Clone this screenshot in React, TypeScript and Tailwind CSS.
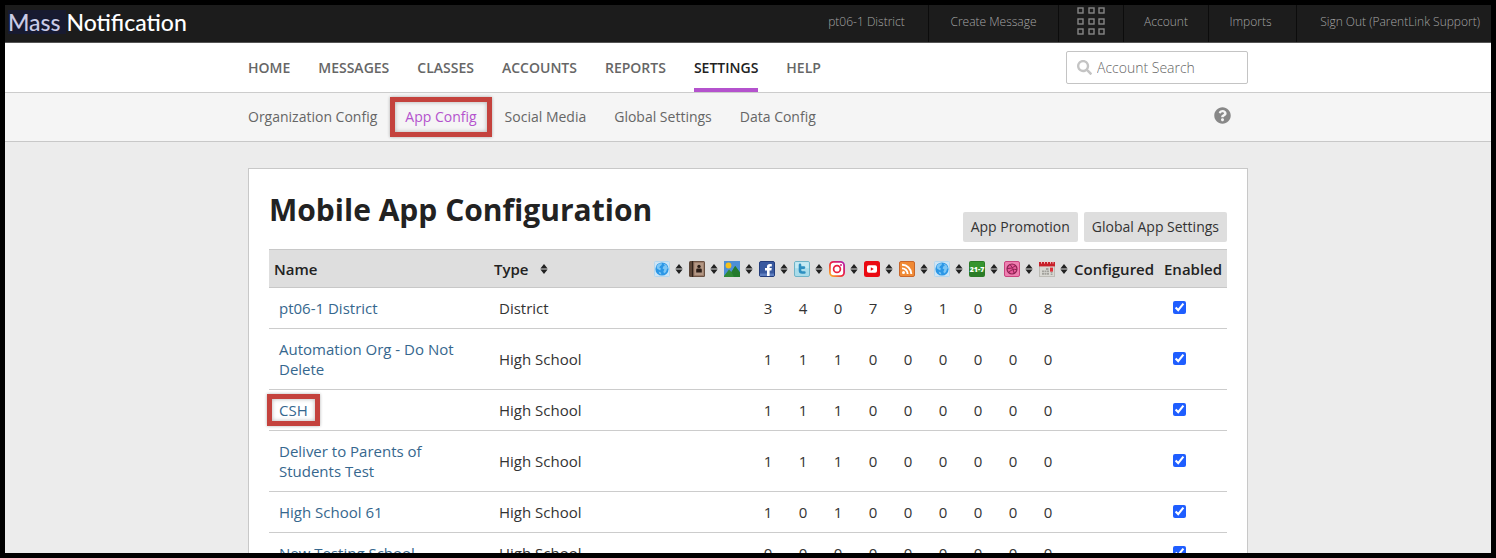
import { ReactNode, useState } from "react";
import { FaQuestionCircle, FaSearch } from "react-icons/fa";

interface Organization {
  name: string;
  type: string;
  counts: number[];
  marked?: boolean;
}

const navItems = ["Home", "Messages", "Classes", "Accounts", "Reports", "Settings", "Help"];

const subNavItems = ["Organization Config", "App Config", "Social Media", "Global Settings", "Data Config"];

const organizations: Organization[] = [
  { name: "pt06-1 District", type: "District", counts: [3, 4, 0, 7, 9, 1, 0, 0, 8] },
  { name: "Automation Org - Do Not Delete", type: "High School", counts: [1, 1, 1, 0, 0, 0, 0, 0, 0] },
  { name: "CSH", type: "High School", counts: [1, 1, 1, 0, 0, 0, 0, 0, 0], marked: true },
  { name: "Deliver to Parents of Students Test", type: "High School", counts: [1, 1, 1, 0, 0, 0, 0, 0, 0] },
  { name: "High School 61", type: "High School", counts: [1, 0, 1, 0, 0, 0, 0, 0, 0] },
  { name: "New Testing School", type: "High School", counts: [0, 0, 0, 0, 0, 0, 0, 0, 0] },
];

function Icon({ children }: { children: ReactNode }) {
  return (
    <svg width="16" height="16" viewBox="0 0 16 16" className="shrink-0" aria-hidden="true">
      {children}
    </svg>
  );
}

function GlobeIcon() {
  return (
    <Icon>
      <rect x="0.5" y="0.5" width="15" height="15" rx="1" fill="#cfe5f5" stroke="#b4d7ee" />
      <circle cx="8" cy="8" r="6.6" fill="#2b97e6" />
      <path d="M2.6 5 5 2.6 8 2.2 7.6 4 6 5.2 5.4 6.8 7 7.6 6.2 9.4 4.6 8.6 3 7.6Z" fill="#7cc6f5" />
      <path d="M9.4 2.6 12.4 4 14 7 12.8 8.4 12 11 10 12.6 9.4 10.4 10.4 8.6 8.6 7.4 9.2 5.6 10.8 4.8Z" fill="#7cc6f5" />
      <path d="M4.6 10.4 6.8 11.4 7.4 13.6 5.6 13Z" fill="#7cc6f5" />
    </Icon>
  );
}

function DirectoryIcon() {
  return (
    <Icon>
      <rect x="0" y="0" width="16" height="16" rx="1.5" fill="#5b4537" />
      <rect x="4.5" y="0.8" width="10.7" height="14.4" rx="0.8" fill="#9a7b68" />
      <rect x="5.5" y="2" width="8.8" height="12" fill="#b39784" />
      <rect x="3" y="0" width="1" height="16" fill="#2f221a" />
      <circle cx="10" cy="5.4" r="1.7" fill="#2a1d17" />
      <path d="M7.2 11.5V8.8Q7.2 7.6 8.6 7.6H11.4Q12.8 7.6 12.8 8.8V11.5Z" fill="#2a1d17" />
    </Icon>
  );
}

function PictureIcon() {
  return (
    <Icon>
      <rect width="16" height="16" fill="#4d8fd6" />
      <circle cx="4.5" cy="4.5" r="2.9" fill="#f5c11d" />
      <path d="M0 15 5 8.5 7.5 11 11.2 5 16 11.5V16H0Z" fill="#2f8a35" />
      <path d="M7.5 11 11.2 5 16 11.5V16H10Z" fill="#237a2c" />
    </Icon>
  );
}

function FacebookIcon() {
  return (
    <Icon>
      <rect x="0.5" y="0.5" width="15" height="15" rx="1.5" fill="#39599f" stroke="#243d7c" />
      <rect x="1" y="12.5" width="14" height="2.5" fill="#5f7fc0" />
      <path d="M8 15V9.5H6V7H8V5.6Q8 3 10.8 3H12.8V5.4H11.4Q10.6 5.4 10.6 6.2V7H12.8L12.4 9.5H10.6V15Z" fill="#fff" />
    </Icon>
  );
}

function TwitterIcon() {
  return (
    <Icon>
      <rect x="0.5" y="0.5" width="15" height="15" rx="1.5" fill="#a9dcea" stroke="#6fb4c8" />
      <rect x="1.2" y="1.2" width="13.6" height="6" fill="#c6eaf3" />
      <path d="M6 3.9V9.6Q6 11.5 8.2 11.5H10.4M6 6.6H10" fill="none" stroke="#2d8fc0" strokeWidth="2.6" strokeLinecap="round" />
    </Icon>
  );
}

function InstagramIcon() {
  return (
    <Icon>
      <defs>
        <linearGradient id="insta" x1="0" y1="1" x2="1" y2="0">
          <stop offset="0" stopColor="#fdb52b" />
          <stop offset="0.5" stopColor="#ee1f3c" />
          <stop offset="1" stopColor="#b222b0" />
        </linearGradient>
      </defs>
      <rect x="0.9" y="0.9" width="14.2" height="14.2" rx="3.6" fill="#fff" stroke="url(#insta)" strokeWidth="1.8" />
      <circle cx="8" cy="8" r="3.4" fill="none" stroke="#e8203f" strokeWidth="1.7" />
      <circle cx="12" cy="4" r="1" fill="#cf1f7c" />
    </Icon>
  );
}

function YoutubeIcon() {
  return (
    <Icon>
      <rect width="16" height="16" rx="2.5" fill="#ea0a12" />
      <rect x="3" y="4.2" width="10" height="7.6" rx="1.8" fill="#fff" />
      <path d="M6.8 6.2V9.8L9.8 8Z" fill="#ea0a12" />
    </Icon>
  );
}

function RssIcon() {
  return (
    <Icon>
      <rect x="0.5" y="0.5" width="15" height="15" rx="1.5" fill="#f08a35" stroke="#c9662a" />
      <circle cx="4.5" cy="11.6" r="1.5" fill="#fff" />
      <path d="M3 7.4A5.7 5.7 0 0 1 8.7 13M3 3.8A9.3 9.3 0 0 1 12.3 13" fill="none" stroke="#fff" strokeWidth="1.9" />
    </Icon>
  );
}

function ScoreIcon() {
  return (
    <Icon>
      <rect x="0.5" y="0.5" width="15" height="15" rx="1" fill="#36952f" stroke="#2b7a27" />
      <rect x="1" y="11" width="14" height="4" fill="#2a7c26" />
      <text x="8" y="11" textAnchor="middle" fontSize="7" fontWeight="800" fill="#fff" fontFamily="Open Sans, sans-serif">
        21-7
      </text>
    </Icon>
  );
}

function DribbbleIcon() {
  return (
    <Icon>
      <rect x="0.5" y="0.5" width="15" height="15" rx="1.5" fill="#ee7fb0" stroke="#c9447f" />
      <circle cx="8" cy="8" r="5" fill="#e8589a" stroke="#8d2352" strokeWidth="1.2" />
      <path d="M6 3.4Q9.4 7 10.2 12.4M3 7.6Q8.4 8 11.6 4.6M4.6 11.6Q7.6 7.6 13 8.6" fill="none" stroke="#8d2352" strokeWidth="1" />
    </Icon>
  );
}

function CalendarIcon() {
  return (
    <Icon>
      <rect x="0.5" y="2" width="15" height="13.5" fill="#d9d8d3" stroke="#bdbcb6" />
      <rect x="0" y="1" width="16" height="4.4" fill="#c8202a" />
      <path d="M2.5 0V2.6M5.5 0V2.6M8.5 0V2.6M11.5 0V2.6M14 0V2.6" stroke="#efcfcf" strokeWidth="0.9" />
      <path d="M7 8H10M3 10.4H10M3 12.8H10M12.6 10.6V14" stroke="#a3a29d" strokeWidth="1.8" strokeDasharray="2 0.5" />
      <rect x="11" y="6.6" width="3" height="4" fill="#e0313a" />
    </Icon>
  );
}

const channels = [
  { label: "Website", icon: <GlobeIcon /> },
  { label: "Directory", icon: <DirectoryIcon /> },
  { label: "Photos", icon: <PictureIcon /> },
  { label: "Facebook", icon: <FacebookIcon /> },
  { label: "Twitter", icon: <TwitterIcon /> },
  { label: "Instagram", icon: <InstagramIcon /> },
  { label: "YouTube", icon: <YoutubeIcon /> },
  { label: "RSS", icon: <RssIcon /> },
  { label: "Web Links", icon: <GlobeIcon /> },
  { label: "Scores", icon: <ScoreIcon /> },
  { label: "Dribbble", icon: <DribbbleIcon /> },
  { label: "Calendar", icon: <CalendarIcon /> },
];

function SortArrows() {
  return (
    <svg width="8" height="10" viewBox="0 0 8 10" className="shrink-0" aria-hidden="true">
      <path d="M4 0 7.6 4.5H0.4ZM4 10 7.6 5.5H0.4Z" fill="#222" />
    </svg>
  );
}

function AppsIcon() {
  return (
    <svg width="28" height="29" viewBox="0 0 28 29" aria-hidden="true">
      {[0, 11, 21].map((y) =>
        [0, 11, 21].map((x) => (
          <rect key={`${x}-${y}`} x={x + 1} y={y + 1} width="5" height="5" fill="none" stroke="#868686" strokeWidth="1.4" />
        ))
      )}
    </svg>
  );
}

// Red outline drawn around the step the reader has to click
function Marker({ className }: { className: string }) {
  return (
    <span
      className={`pointer-events-none absolute border-5 border-[#c4423d] shadow-[0_0_3px_rgba(0,0,0,0.3),inset_0_0_4px_rgba(0,0,0,0.3)] ${className}`}
    />
  );
}

function TopBar() {
  return (
    <header className="flex h-[38px] items-stretch border-b border-[#555] bg-[#1c1c1c] text-xs font-light text-[#a5a5a5]">
      <div className="flex flex-1 items-center pl-[3px] pb-1 font-['Lato',sans-serif] text-[23px] leading-6 font-medium text-white">
        <span className="bg-[#171a30] text-[#c9cbe6]">Mass&nbsp;</span>
        <span>Notification</span>
      </div>
      <nav className="flex divide-x divide-[#0c0c0c]">
        <a href="#" className="flex w-[124px] items-center justify-center pb-1">pt06-1 District</a>
        <a href="#" className="flex w-[130px] items-center justify-center pb-1">Create Message</a>
        <a href="#" aria-label="Apps" className="flex w-[65px] items-center justify-center pb-[5px]"><AppsIcon /></a>
        <a href="#" className="flex w-[85px] items-center justify-center pb-1">Account</a>
        <a href="#" className="flex w-[88px] items-center justify-center pr-1 pb-1">Imports</a>
        <a href="#" className="flex w-[194px] items-center justify-end pr-[11px] pb-1">Sign Out (ParentLink Support)</a>
      </nav>
    </header>
  );
}

function MainNav() {
  return (
    <div className="border-b border-[#ccc] bg-white">
      <div className="mx-auto flex h-[49px] max-w-[1000px] items-stretch justify-between">
        <nav className="flex gap-7 text-sm font-semibold uppercase text-[#666]">
          {navItems.map((item) => (
            <a
              key={item}
              href="#"
              className={
                item === "Settings"
                  ? "flex items-center border-y-4 border-t-transparent border-b-[#b452cd] text-[#222]"
                  : "flex items-center border-y-4 border-transparent"
              }
            >
              {item}
            </a>
          ))}
        </nav>
        <label className="my-2 flex w-[182px] items-center gap-[5px] rounded-xs border border-[#c4c4c4] pl-[10px]">
          <FaSearch className="size-[15px] shrink-0 text-[#c4c4c4]" />
          <input
            type="text"
            aria-label="Account Search"
            placeholder="Account Search"
            className="w-full min-w-0 text-sm font-light outline-none placeholder:text-[#666]"
          />
        </label>
      </div>
    </div>
  );
}

function SubNav() {
  return (
    <div className="border-b border-[#c8c8c8] bg-[#f5f5f5]">
      <div className="mx-auto flex h-12 max-w-[1000px] items-center justify-between pr-[17px]">
        <nav className="flex gap-7 text-sm text-[#666]">
          {subNavItems.map((item) => (
            <a key={item} href="#" className={item === "App Config" ? "relative text-[#b452cd]" : ""}>
              {item}
              {item === "App Config" && <Marker className="-inset-x-[15px] -inset-y-[10px]" />}
            </a>
          ))}
        </nav>
        <a href="#" aria-label="Help" className="pb-[3px]">
          <FaQuestionCircle className="size-[17px] text-[#888]" />
        </a>
      </div>
    </div>
  );
}

function OrganizationTable() {
  const [disabled, setDisabled] = useState<string[]>([]);

  const toggle = (name: string) => {
    setDisabled((prev) => (prev.includes(name) ? prev.filter((n) => n !== name) : [...prev, name]));
  };

  return (
    <table className="w-full table-fixed text-[15px] leading-5 text-[#333]">
      <colgroup>
        <col className="w-[220px]" />
        <col />
        {channels.map((channel) => (
          <col key={channel.label} className="w-[35px]" />
        ))}
        <col className="w-[90px]" />
        <col className="w-[68px]" />
      </colgroup>
      <thead>
        <tr className="h-[38px] border-y border-[#c8c8c8] bg-[#dedede] text-left text-[#222]">
          <th className="pl-[5px] font-semibold">Name</th>
          <th className="pl-[5px] font-semibold">
            <span className="flex items-center gap-3">Type <SortArrows /></span>
          </th>
          {channels.map((channel) => (
            <th key={channel.label} title={channel.label} className="pl-[5px]">
              <span className="flex items-center gap-[5px]">
                {channel.icon}
                <SortArrows />
              </span>
            </th>
          ))}
          <th className="pl-[5px] font-semibold">Configured</th>
          <th className="pl-[5px] font-semibold">Enabled</th>
        </tr>
      </thead>
      <tbody>
        {organizations.map((org) => (
          <tr key={org.name} className="border-b border-[#ccc]">
            <td className="px-[10px] py-[10px]">
              <a href="#" className="relative inline-block text-[#36678e]">
                {org.name}
                {org.marked && <Marker className="-inset-x-3 -inset-y-[6px]" />}
              </a>
            </td>
            <td className="px-[10px]">{org.type}</td>
            <td />
            <td />
            <td />
            {org.counts.map((count, i) => (
              <td key={i} className="pr-[7px] text-center">{count}</td>
            ))}
            <td />
            <td className="pb-[2px] pl-[14px]">
              <input
                type="checkbox"
                aria-label={`Enable ${org.name}`}
                checked={!disabled.includes(org.name)}
                onChange={() => toggle(org.name)}
                className="block size-[13px] accent-[#1f5eff]"
              />
            </td>
          </tr>
        ))}
      </tbody>
    </table>
  );
}

export default function App() {
  return (
    <div className="h-screen overflow-hidden border-5 border-black bg-[#ececec] font-['Open_Sans',sans-serif]">
      <TopBar />
      <MainNav />
      <SubNav />
      <main className="mx-auto mt-[26px] max-w-[1000px] border border-[#c8c8c8] bg-white px-5 pb-5">
        <div className="flex items-end justify-between pt-[21px] pb-[7px]">
          <h1 className="self-start text-[30px] leading-10 font-bold text-[#222]">Mobile App Configuration</h1>
          <div className="flex gap-[6px] pt-[22px] text-sm text-[#333]">
            <button type="button" className="h-[30px] rounded-xs bg-[#dedede] px-2">App Promotion</button>
            <button type="button" className="h-[30px] rounded-xs bg-[#dedede] px-2">Global App Settings</button>
          </div>
        </div>
        <OrganizationTable />
      </main>
    </div>
  );
}
